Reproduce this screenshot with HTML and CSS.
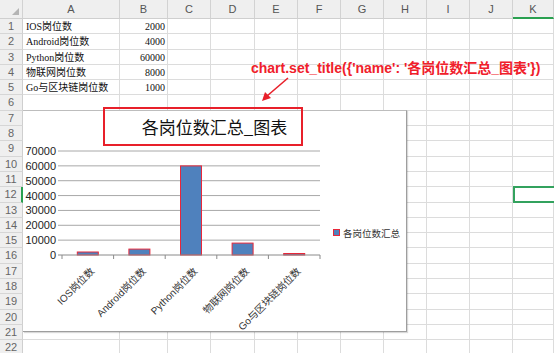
FILE: index.html
```html
<!DOCTYPE html>
<html lang="zh">
<head>
    <meta charset="UTF-8">
    <title>各岗位数汇总</title>
    <link rel="stylesheet" href="styles.css">
</head>
<body>
    <div class="sheet">
        <div class="row head">
            <div class="corner"><span class="tri"></span></div>
            <div>A</div><div>B</div><div>C</div><div>D</div><div>E</div><div>F</div>
            <div>G</div><div>H</div><div>I</div><div>J</div><div class="sel">K</div>
        </div>
        <div class="row"><div class="num">1</div><div class="txt">IOS岗位数</div><div class="val">2000</div><div></div><div></div><div></div><div></div><div></div><div></div><div></div><div></div><div></div></div>
        <div class="row"><div class="num">2</div><div class="txt">Android岗位数</div><div class="val">4000</div><div></div><div></div><div></div><div></div><div></div><div></div><div></div><div></div><div></div></div>
        <div class="row"><div class="num">3</div><div class="txt">Python岗位数</div><div class="val">60000</div><div></div><div></div><div></div><div></div><div></div><div></div><div></div><div></div><div></div></div>
        <div class="row"><div class="num">4</div><div class="txt">物联网岗位数</div><div class="val">8000</div><div></div><div></div><div></div><div></div><div></div><div></div><div></div><div></div><div></div></div>
        <div class="row"><div class="num">5</div><div class="txt">Go与区块链岗位数</div><div class="val">1000</div><div></div><div></div><div></div><div></div><div></div><div></div><div></div><div></div><div></div></div>
        <div class="row"><div class="num">6</div><div></div><div></div><div></div><div></div><div></div><div></div><div></div><div></div><div></div><div></div><div></div></div>
        <div class="row"><div class="num">7</div><div></div><div></div><div></div><div></div><div></div><div></div><div></div><div></div><div></div><div></div><div></div></div>
        <div class="row"><div class="num">8</div><div></div><div></div><div></div><div></div><div></div><div></div><div></div><div></div><div></div><div></div><div></div></div>
        <div class="row"><div class="num">9</div><div></div><div></div><div></div><div></div><div></div><div></div><div></div><div></div><div></div><div></div><div></div></div>
        <div class="row"><div class="num">10</div><div></div><div></div><div></div><div></div><div></div><div></div><div></div><div></div><div></div><div></div><div></div></div>
        <div class="row"><div class="num">11</div><div></div><div></div><div></div><div></div><div></div><div></div><div></div><div></div><div></div><div></div><div></div></div>
        <div class="row"><div class="num sel">12</div><div></div><div></div><div></div><div></div><div></div><div></div><div></div><div></div><div></div><div></div><div class="active"></div></div>
        <div class="row"><div class="num">13</div><div></div><div></div><div></div><div></div><div></div><div></div><div></div><div></div><div></div><div></div><div></div></div>
        <div class="row"><div class="num">14</div><div></div><div></div><div></div><div></div><div></div><div></div><div></div><div></div><div></div><div></div><div></div></div>
        <div class="row"><div class="num">15</div><div></div><div></div><div></div><div></div><div></div><div></div><div></div><div></div><div></div><div></div><div></div></div>
        <div class="row"><div class="num">16</div><div></div><div></div><div></div><div></div><div></div><div></div><div></div><div></div><div></div><div></div><div></div></div>
        <div class="row"><div class="num">17</div><div></div><div></div><div></div><div></div><div></div><div></div><div></div><div></div><div></div><div></div><div></div></div>
        <div class="row"><div class="num">18</div><div></div><div></div><div></div><div></div><div></div><div></div><div></div><div></div><div></div><div></div><div></div></div>
        <div class="row"><div class="num">19</div><div></div><div></div><div></div><div></div><div></div><div></div><div></div><div></div><div></div><div></div><div></div></div>
        <div class="row"><div class="num">20</div><div></div><div></div><div></div><div></div><div></div><div></div><div></div><div></div><div></div><div></div><div></div></div>
        <div class="row"><div class="num">21</div><div></div><div></div><div></div><div></div><div></div><div></div><div></div><div></div><div></div><div></div><div></div></div>
        <div class="row"><div class="num">22</div><div></div><div></div><div></div><div></div><div></div><div></div><div></div><div></div><div></div><div></div><div></div></div>

        <!-- chart object floating over the cells -->
        <div class="chart">
            <svg width="383" height="220" viewBox="0 0 383 220">
                <text class="title" x="191.5" y="23" text-anchor="middle">各岗位数汇总_图表</text>
                <g class="grid">
                    <line x1="35" y1="40" x2="297" y2="40"/>
                    <line x1="35" y1="54.86" x2="297" y2="54.86"/>
                    <line x1="35" y1="69.71" x2="297" y2="69.71"/>
                    <line x1="35" y1="84.57" x2="297" y2="84.57"/>
                    <line x1="35" y1="99.43" x2="297" y2="99.43"/>
                    <line x1="35" y1="114.29" x2="297" y2="114.29"/>
                    <line x1="35" y1="129.14" x2="297" y2="129.14"/>
                </g>
                <g class="ylab" text-anchor="end">
                    <text x="33" y="44">70000</text>
                    <text x="33" y="58.9">60000</text>
                    <text x="33" y="73.7">50000</text>
                    <text x="33" y="88.6">40000</text>
                    <text x="33" y="103.4">30000</text>
                    <text x="33" y="118.3">20000</text>
                    <text x="33" y="133.1">10000</text>
                    <text x="33" y="148">0</text>
                </g>
                <g class="bar">
                    <rect x="54.3" y="141" width="21" height="3"/>
                    <rect x="105.9" y="138.1" width="21" height="5.9"/>
                    <rect x="157.5" y="54.9" width="21" height="89.1"/>
                    <rect x="209.1" y="132.1" width="21" height="11.9"/>
                    <rect x="260.7" y="142.5" width="21" height="1.5"/>
                </g>
                <g class="axis">
                    <line x1="35" y1="144" x2="297" y2="144"/>
                    <line x1="39" y1="144" x2="39" y2="148"/>
                    <line x1="90.6" y1="144" x2="90.6" y2="148"/>
                    <line x1="142.2" y1="144" x2="142.2" y2="148"/>
                    <line x1="193.8" y1="144" x2="193.8" y2="148"/>
                    <line x1="245.4" y1="144" x2="245.4" y2="148"/>
                    <line x1="297" y1="144" x2="297" y2="148"/>
                </g>
                <g class="xlab" text-anchor="end">
                    <text x="72" y="161" transform="rotate(-45 72 161)">IOS岗位数</text>
                    <text x="123.6" y="161" transform="rotate(-45 123.6 161)">Android岗位数</text>
                    <text x="175.2" y="161" transform="rotate(-45 175.2 161)">Python岗位数</text>
                    <text x="226.8" y="161" transform="rotate(-45 226.8 161)">物联网岗位数</text>
                    <text x="278.4" y="161" transform="rotate(-45 278.4 161)">Go与区块链岗位数</text>
                </g>
                <rect class="key" x="310.5" y="118.5" width="6" height="6"/>
                <text class="legend" x="320" y="125.5">各岗位数汇总</text>
            </svg>
        </div>

        <!-- annotation -->
        <div class="mark"></div>
        <div class="note">chart.set_title({'name': '各岗位数汇总_图表'})</div>
        <svg class="arrow" width="40" height="30" viewBox="0 0 40 30">
            <line x1="34" y1="1" x2="13" y2="19"/>
            <polygon points="8,24 11,15 17,21"/>
        </svg>
    </div>
</body>
</html>
```

FILE: styles.css
```css
body {
    margin: 0;
    background: #fff;
    overflow: hidden;
}
.sheet {
    position: relative;
    width: 554px;
    height: 353px;
    overflow: hidden;
    font-family: "Liberation Sans", Arial, sans-serif;
}
.row {
    display: grid;
    grid-template-columns: 23px 97px 48px 43px 44px 43px 43px 43px 43px 43px 43px 41px;
    height: 15.3px;
}
.row > div {
    border-right: 1px solid #dcdcdc;
    border-bottom: 1px solid #dcdcdc;
    box-sizing: border-box;
    overflow: hidden;
    white-space: nowrap;
}
.row.head {
    height: 19px;
    background: #efefef;
}
.row.head > div {
    border-right: 1px solid #d2d2d2;
    border-bottom: 1px solid #cfcfcf;
    text-align: center;
    font-size: 11px;
    line-height: 19px;
    color: #555;
}
.row.head > div.sel {
    border-bottom: 2px solid #2aa050;
}
.corner {
    position: relative;
}
.tri {
    position: absolute;
    right: 3px;
    bottom: 3px;
    width: 0;
    height: 0;
    border-left: 7px solid transparent;
    border-bottom: 7px solid #b4b4b4;
}
.row > .num {
    background: #efefef;
    border-right: 1px solid #cfcfcf;
    border-bottom: 1px solid #d6d6d6;
    text-align: center;
    font-size: 11px;
    line-height: 15px;
    color: #666;
}
.row > .num.sel {
    border-right: 2px solid #2aa050;
}
.txt, .val {
    font-family: "Liberation Serif", "Noto Sans CJK SC", serif;
    font-size: 10px;
    line-height: 15px;
    color: #111;
}
.txt {
    padding-left: 3px;
}
.val {
    text-align: right;
    padding-right: 2px;
}
.row > div.active {
    border: 2px solid #33a25e;
    border-right: none;
    margin-top: -1px;
    height: 16.5px;
}

.chart {
    position: absolute;
    left: 23px;
    top: 110px;
    width: 383px;
    height: 220px;
    background: #fff;
    border-top: 1px solid #bdbdbd;
    border-right: 1px solid #9e9e9e;
    border-bottom: 1px solid #9e9e9e;
    box-shadow: 1px 1px 1px rgba(0, 0, 0, 0.15);
}
.chart svg {
    display: block;
}
.title {
    font-family: "Noto Sans CJK SC", sans-serif;
    font-size: 17px;
    fill: #111;
}
.grid line {
    stroke: #a8a8a8;
    stroke-width: 1;
}
.axis line {
    stroke: #8a8a8a;
    stroke-width: 1;
}
.ylab text {
    font-family: "Liberation Sans", Arial, sans-serif;
    font-size: 11px;
    fill: #222;
}
.bar rect, .key {
    fill: #4f81bd;
    stroke: #e8283a;
    stroke-width: 1;
}
.xlab text {
    font-family: "Liberation Sans", "Noto Sans CJK SC", sans-serif;
    font-size: 10px;
    fill: #333;
}
.legend {
    font-family: "Noto Sans CJK SC", sans-serif;
    font-size: 9.5px;
    fill: #333;
}

.mark {
    position: absolute;
    left: 103px;
    top: 107px;
    width: 200px;
    height: 39px;
    box-sizing: border-box;
    border: 2px solid #e8202a;
}
.note {
    position: absolute;
    left: 251px;
    top: 59px;
    font-family: "Liberation Sans", "Noto Sans CJK SC", sans-serif;
    font-weight: bold;
    font-size: 14px;
    line-height: 18px;
    color: #f0202a;
    white-space: nowrap;
}
.arrow {
    position: absolute;
    left: 254px;
    top: 77px;
}
.arrow line {
    stroke: #e8202a;
    stroke-width: 1.6;
}
.arrow polygon {
    fill: #e8202a;
}
```
